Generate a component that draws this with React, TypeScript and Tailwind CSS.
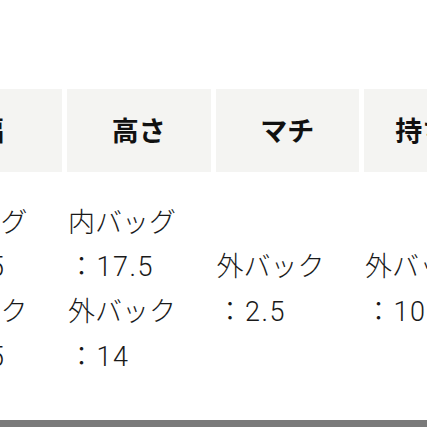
export default function App() {
  const font = { fontFamily: '"Noto Sans CJK JP", "Noto Sans", sans-serif' };
  const bodyFont = { fontFamily: 'Roboto, "Noto Sans CJK JP", sans-serif' };
  const cols = [
    { h: "幅", lines: ["内バッグ", "：22.5", "外バック", "：21.5"] },
    { h: "高さ", lines: ["内バッグ", "：17.5", "外バック", "：14"] },
    { h: "マチ", lines: ["外バック", "：2.5"] },
    { h: "持ち手", lines: ["外バック", "：10.5"] },
  ];
  return (
    <div className="w-[427px] h-[427px] overflow-hidden bg-white flex flex-col" style={font}>
      <div className="flex-1 pt-[89px]">
        <div className="flex gap-[5px] ml-[-81.5px]">
          {cols.map((c) => (
            <div key={c.h} className="w-[143.5px] shrink-0 flex flex-col gap-[6px]">
              <div className="h-[83px] bg-[#f4f4f2] flex items-center justify-center text-[27px] font-bold text-[#111]">
                {c.h}
              </div>
              <div
                className="h-[224px] flex flex-col justify-center pl-[1px] text-[27px] font-light leading-[44.7px] text-[#1a1a1a] whitespace-nowrap"
                style={bodyFont}
              >
                {c.lines.map((l, i) => (
                  <div key={i} className={l.startsWith("：") ? "tracking-[1.5px]" : ""}>
                    {l}
                  </div>
                ))}
              </div>
            </div>
          ))}
        </div>
      </div>
      <div className="h-[7px] bg-[#7a7a7a]" />
    </div>
  );
}
